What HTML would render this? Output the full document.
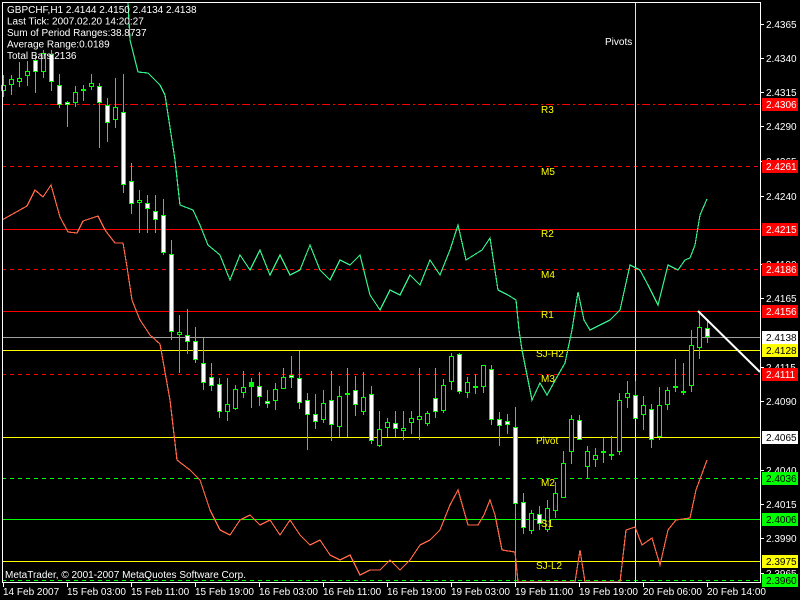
<!DOCTYPE html>
<html><head><meta charset="utf-8"><style>
html,body{margin:0;padding:0;background:#000;}
svg{display:block;font-family:"Liberation Sans",sans-serif;}
line,rect,polyline{shape-rendering:crispEdges;}
</style></head><body>
<svg id="c" width="800" height="600" xmlns="http://www.w3.org/2000/svg">
<rect width="800" height="600" fill="#000"/>
<g id="lines"></g>
<g id="candles"></g>
<g id="over"></g>
</svg>
<script>
var NS="http://www.w3.org/2000/svg";
function el(p,t,a,txt){var e=document.createElementNS(NS,t);for(var k in a)e.setAttribute(k,a[k]);if(txt!=null)e.textContent=txt;document.getElementById(p).appendChild(e);return e;}
var lv=[
[104,"#ff0000","8,3,2,3","R3","2.4306","#ff0000","#fff",113],
[166,"#ff0000","4,4","M5","2.4261","#ff0000","#fff",175],
[229,"#ff0000",null,"R2","2.4215","#ff0000","#fff",237],
[269,"#ff0000","4,4","M4","2.4186","#ff0000","#fff",278],
[311,"#ff0000",null,"R1","2.4156","#ff0000","#fff",318],
[337,"#a0a0a0",null,"","2.4138","#fff","#000",0],
[350,"#ffff00",null,"SJ-H2","2.4128","#ffff00","#000",357],
[374,"#ff0000","4,4","M3","2.4111","#ff0000","#fff",382],
[437,"#ffff00",null,"Pivot","2.4065","#fff","#000",444],
[478,"#00ff00","4,4","M2","2.4036","#00ff00","#000",486],
[519,"#00ff00",null,"S1","2.4006","#00ff00","#000",527],
[561,"#ffff00",null,"SJ-L2","2.3975","#ffff00","#000",569],
[580,"#00ff00","4,4","","2.3960","#00ff00","#000",0]
];
lv.forEach(function(l){var a={x1:2,x2:760,y1:l[0],y2:l[0]+1,stroke:"none",fill:l[1]};
 if(l[2]){var d=l[2].split(",").map(Number),x=2,i=0;while(x<760){if(i%2==0)el("lines","rect",{x:x,y:l[0],width:Math.min(d[i%d.length],760-x),height:1,fill:l[1]});x+=d[i%d.length];i++;}}
 else el("lines","rect",{x:2,y:l[0],width:758,height:1,fill:l[1]});});
el("lines","rect",{x:635,y:2,width:1,height:580,fill:"#e8e8a8"});
el("lines","polyline",{fill:"none",stroke:"#33ee88","stroke-width":1.2,points:"128,2 130,40 138,72 148,73 160,85 165,95 175,160 180,205 193,210 200,225 208,245 220,255 230,280 240,255 250,270 260,250 270,275 280,255 290,275 300,270 310,245 320,270 330,280 340,260 350,265 360,255 370,295 380,310 390,290 400,295 410,275 420,285 430,260 440,275 450,250 458,225 466,260 474,255 482,250 490,238 498,290 508,295 516,300 519,330 522,350 532,400 540,383 547,395 557,377 565,363 572,330 578,292 584,320 590,330 600,325 610,320 620,310 630,265 640,270 648,285 658,305 668,265 678,270 685,260 690,258 695,245 700,215 707,199"});
el("lines","polyline",{fill:"none",stroke:"#ff6644","stroke-width":1.2,points:"2,220 27,206 35,190 43,197 51,185 60,217 68,232 77,233 83,221 98,216 105,230 115,243 123,243 127,267 132,300 140,320 150,335 160,344 170,400 177,460 190,470 200,480 210,510 220,530 230,535 240,520 250,515 260,525 270,520 280,535 290,520 300,535 310,545 320,540 330,555 340,560 350,555 360,575 370,570 380,570 390,560 400,570 410,560 420,545 430,540 440,530 450,505 458,490 468,525 478,525 484,515 490,500 495,515 502,550 515,552 518,582 575,582 580,550 585,582 620,582 626,530 635,527 642,545 652,538 660,565 668,530 676,520 690,518 696,490 707,460"});
var C=[
[3,85,91,75,97,0],[11,79,85,75,95,0],[19,78,82,62,87,0],[27,71,76,61,86,0],[35,60,72,55,93,1],[43,53,72,50,78,0],[51,54,82,50,91,1],[59,85,105,74,108,1],[67,102,105,101,127,1],[75,92,103,86,107,0],[83,89,91,85,101,2],[91,83,87,74,90,0],[99,86,103,83,148,1],[107,105,123,98,142,1],[115,107,120,78,128,0],[123,112,185,74,193,1],[131,181,204,163,214,1],[139,200,203,190,233,0],[147,203,209,195,233,1],[155,211,220,195,233,1],[163,215,253,199,255,1],[171,254,332,240,340,1],
[179,332,335,315,373,0],[187,335,342,309,354,1],[195,341,360,327,363,1],[203,363,383,338,390,1],[211,377,386,363,391,1],[219,384,412,378,418,1],[227,404,412,378,421,0],[235,389,409,385,410,0],[243,387,393,371,398,0],[251,382,387,378,408,2],[259,386,397,372,406,1],[267,401,404,390,408,1],[275,389,401,383,410,0],[283,377,389,368,389,0],[291,375,377,356,388,1],[299,378,403,351,409,1],[307,400,415,393,450,1],[315,414,422,394,429,1],[323,403,420,390,423,0],[331,400,425,371,441,1],[339,396,427,386,437,0],[347,393,394,368,437,2],[355,390,405,376,416,1],[363,397,412,372,415,0],[371,394,441,386,444,1],[379,429,446,411,447,0],[387,422,428,418,437,0],[395,423,429,411,437,1],[403,428,429,411,440,0],[411,418,423,411,434,0],[419,416,420,368,440,0],[427,413,424,411,426,0],[435,398,412,368,418,1],[443,385,411,379,413,0],
[451,356,382,353,390,0],[459,354,392,353,394,1],[467,382,393,377,398,0],[475,386,388,374,394,2],[483,365,387,365,393,0],[491,369,420,365,425,1],[499,419,426,412,446,1],[507,421,425,414,434,1],[515,427,504,407,582,1],[523,502,528,493,534,1],[531,513,531,510,534,0],[539,514,524,506,530,1],[547,508,530,500,532,0],[555,493,511,482,518,0],[563,463,498,451,498,0],[571,419,452,415,464,0],[579,420,440,415,440,1],[587,451,467,446,478,0],[595,455,460,448,467,0],[603,451,453,438,463,2],[611,454,456,436,460,2],[619,400,452,393,455,0],[627,393,398,381,408,0],[635,395,419,381,418,1],[643,405,415,396,430,0],[651,409,440,404,448,1],[659,405,437,387,440,0],[667,390,405,387,410,0],[675,386,388,359,392,2],[683,391,393,363,395,2],[691,345,386,330,392,0],[699,327,348,313,359,0],[707,328,337,319,343,1]
];
C.forEach(function(c){
 el("candles","rect",{x:c[0],y:c[3],width:1,height:c[4]-c[3],fill:"#00ff00"});
 if(c[5]==2){el("candles","rect",{x:c[0]-2,y:c[1],width:5,height:Math.max(2,c[2]-c[1]),fill:"#00ff00"});}
 else {el("candles","rect",{x:c[0]-2,y:c[1],width:5,height:Math.max(3,c[2]-c[1]),fill:"#00ff00"});
   var h=Math.max(1,c[2]-c[1]-2);el("candles","rect",{x:c[0]-1,y:c[1]+1,width:3,height:h,fill:c[5]?"#fff":"#000"});}
});
el("over","line",{x1:698,y1:311,x2:760,y2:372,stroke:"#fff","stroke-width":2,style:"shape-rendering:auto"});
lv.forEach(function(l){if(l[3]){var x=l[3].length>2?536:541;el("over","text",{x:x,y:l[7],fill:"#ffff00","font-size":10},l[3]);}});
el("over","text",{x:605,y:45,fill:"#fff","font-size":10},"Pivots");
el("over","rect",{x:760,y:0,width:40,height:600,fill:"#000"});
el("over","rect",{x:0,y:582,width:800,height:18,fill:"#000"});
el("over","rect",{x:760,y:2,width:1,height:581,fill:"#fff"});
el("over","rect",{x:2,y:582,width:759,height:1,fill:"#fff"});
el("over","rect",{x:2,y:2,width:1,height:581,fill:"#fff"});
el("over","rect",{x:2,y:2,width:759,height:1,fill:"#fff"});
var ax=[["2.4365",24],["2.4340",58],["2.4315",92],["2.4290",126],["2.4265",161],["2.4240",196],["2.4190",264],["2.4165",298],["2.4115",367],["2.4090",401],["2.4040",470],["2.4015",504],["2.3990",538],["2.3965",573]];
ax.forEach(function(a){el("over","rect",{x:761,y:a[1],width:3,height:1,fill:"#fff"});el("over","text",{x:766,y:a[1]+4,fill:"#fff","font-size":10},a[0]);});
lv.forEach(function(l){el("over","rect",{x:762,y:l[0]-6,width:36,height:13,fill:l[5]});el("over","text",{x:766,y:l[0]+4,fill:l[6],"font-size":10},l[4]);});
var tl=["14 Feb 2007","15 Feb 03:00","15 Feb 11:00","15 Feb 19:00","16 Feb 03:00","16 Feb 11:00","16 Feb 19:00","19 Feb 03:00","19 Feb 11:00","19 Feb 19:00","20 Feb 06:00","20 Feb 14:00"];
tl.forEach(function(t,i){var x=3+64*i;el("over","rect",{x:x,y:583,width:1,height:4,fill:"#fff"});el("over","text",{x:x,y:595,fill:"#fff","font-size":10},t);});
var inf=["GBPCHF,H1  2.4144 2.4150 2.4134 2.4138","Last Tick: 2007.02.20 14:20:27","Sum of Period Ranges:38.8737","Average Range:0.0189","Total Bars:2136"];
inf.forEach(function(t,i){el("over","text",{x:7,y:13+11.5*i,fill:"#fff","font-size":10,"xml:space":"preserve"},t);});
el("over","text",{x:5,y:578,fill:"#fff","font-size":10},"MetaTrader, © 2001-2007 MetaQuotes Software Corp.");
</script>
</body></html>
